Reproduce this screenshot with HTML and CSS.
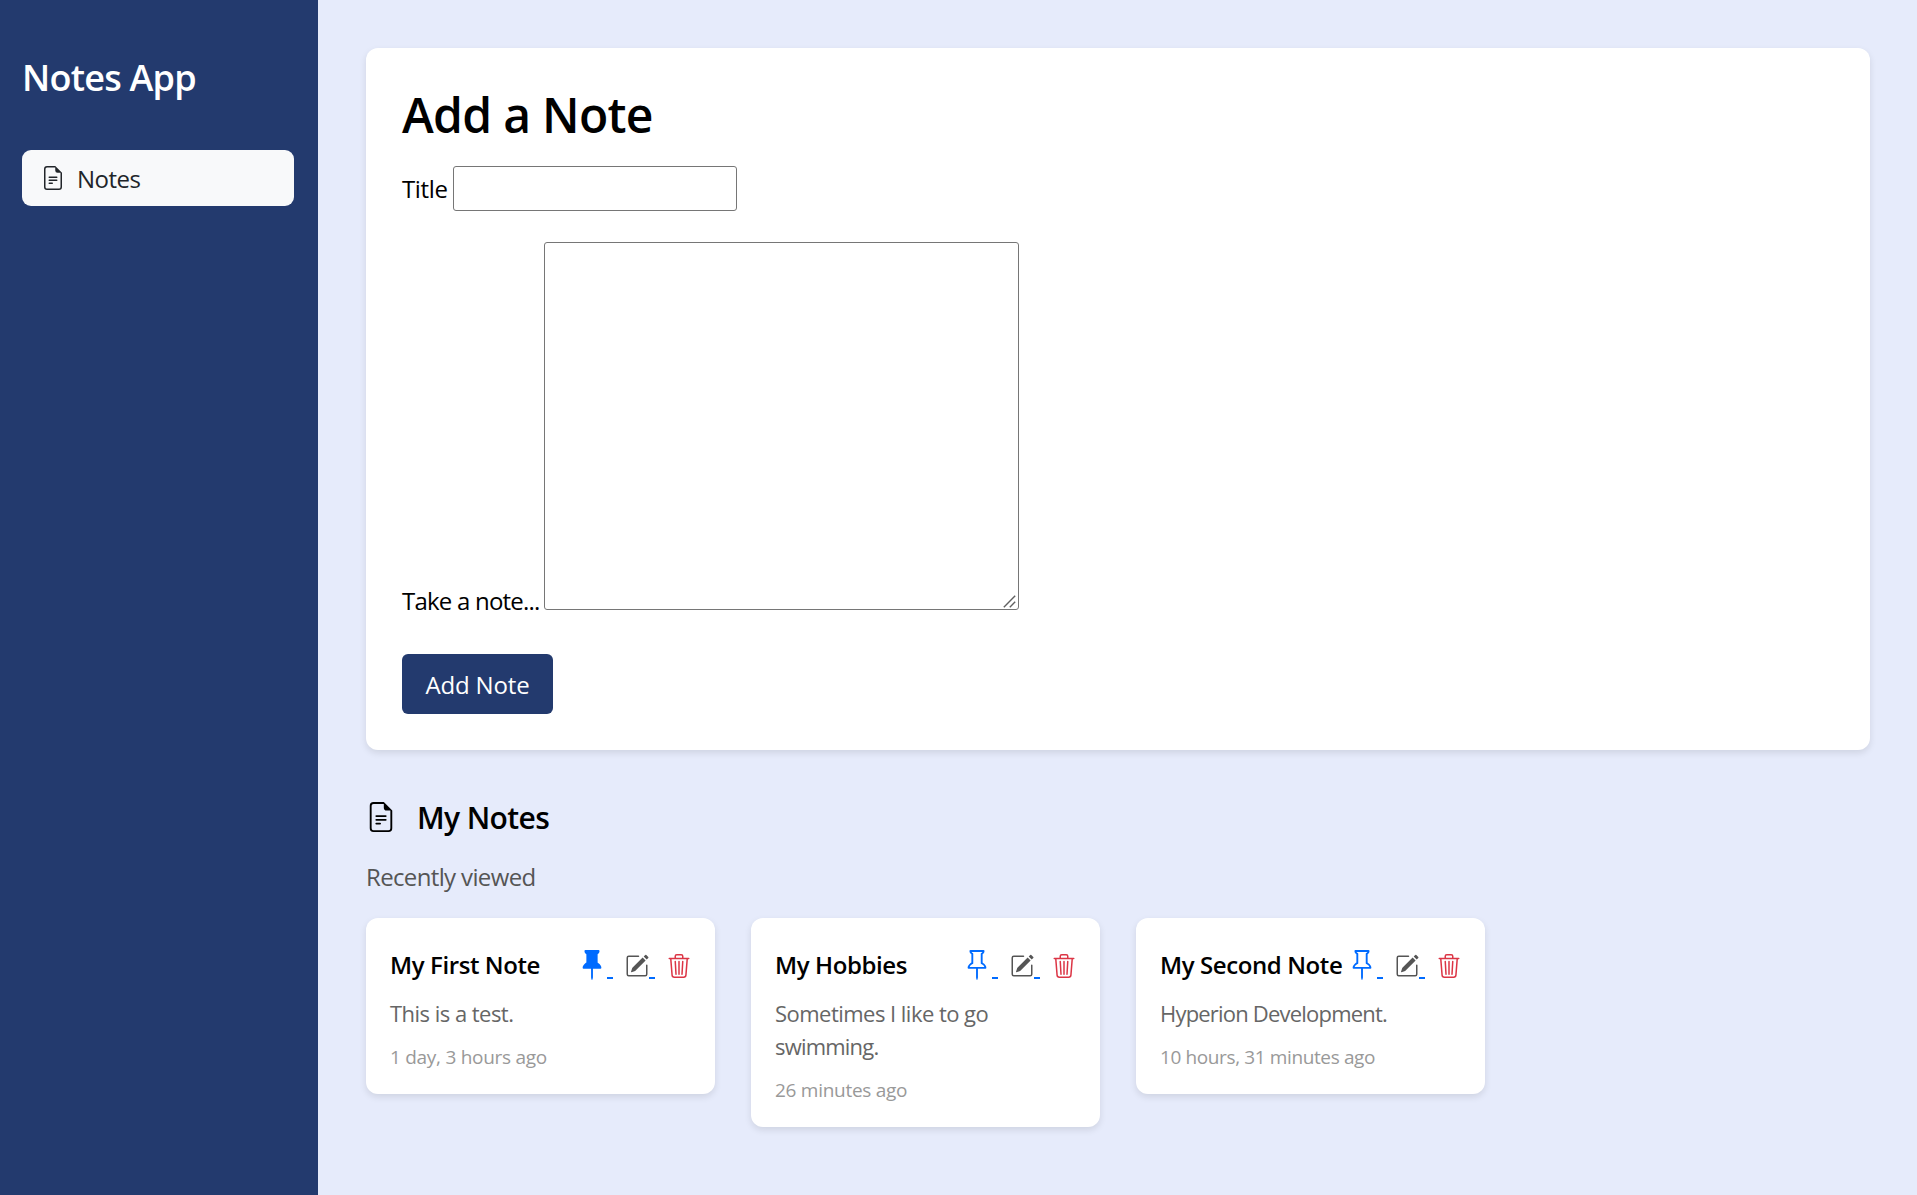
FILE: index.html
```html
<!DOCTYPE html>
<html lang="en">
<head>
<meta charset="utf-8">
<title>Notes App</title>
<link rel="stylesheet" href="styles.css">
</head>
<body>
<svg class="sprite" aria-hidden="true">
  <symbol id="file" viewBox="0 0 16 16"><path d="M5.5 7a.5.5 0 0 0 0 1h5a.5.5 0 0 0 0-1zM5 9.5a.5.5 0 0 1 .5-.5h5a.5.5 0 0 1 0 1h-5a.5.5 0 0 1-.5-.5m0 2a.5.5 0 0 1 .5-.5h2a.5.5 0 0 1 0 1h-2a.5.5 0 0 1-.5-.5"/><path d="M9.5 0H4a2 2 0 0 0-2 2v12a2 2 0 0 0 2 2h8a2 2 0 0 0 2-2V4.5zm0 1v2A1.5 1.5 0 0 0 11 4.5h2V14a1 1 0 0 1-1 1H4a1 1 0 0 1-1-1V2a1 1 0 0 1 1-1z"/></symbol>
  <symbol id="pin" viewBox="0 0 16 16"><path d="M4.146.146A.5.5 0 0 1 4.5 0h7a.5.5 0 0 1 .5.5c0 .68-.342 1.174-.646 1.479-.126.125-.25.224-.354.298v4.431l.078.048c.203.127.476.314.751.555C12.36 7.775 13 8.527 13 9.5a.5.5 0 0 1-.5.5h-4v4.5c0 .276-.224 1.5-.5 1.5s-.5-1.224-.5-1.5V10h-4a.5.5 0 0 1-.5-.5c0-.973.64-1.725 1.17-2.189A6 6 0 0 1 5 6.708V2.277a3 3 0 0 1-.354-.298C4.342 1.674 4 1.179 4 .5a.5.5 0 0 1 .146-.354m1.58 1.408-.002-.001zm-.002-.001.002.001A.5.5 0 0 1 6 2v5a.5.5 0 0 1-.276.447h-.002l-.012.007-.054.03a5 5 0 0 0-.827.58c-.318.278-.585.596-.725.936h7.792c-.14-.34-.407-.658-.725-.936a5 5 0 0 0-.881-.61l-.012-.006h-.002A.5.5 0 0 1 10 7V2a.5.5 0 0 1 .295-.458 1.8 1.8 0 0 0 .351-.271c.08-.08.155-.17.214-.271H5.14q.091.15.214.271a1.8 1.8 0 0 0 .37.282"/></symbol>
  <symbol id="pin-fill" viewBox="0 0 16 16"><path d="M4.146.146A.5.5 0 0 1 4.5 0h7a.5.5 0 0 1 .5.5c0 .68-.342 1.174-.646 1.479-.126.125-.25.224-.354.298v4.431l.078.048c.203.127.476.314.751.555C12.36 7.775 13 8.527 13 9.5a.5.5 0 0 1-.5.5h-4v4.5c0 .276-.224 1.5-.5 1.5s-.5-1.224-.5-1.5V10h-4a.5.5 0 0 1-.5-.5c0-.973.64-1.725 1.17-2.189A6 6 0 0 1 5 6.708V2.277a3 3 0 0 1-.354-.298C4.342 1.674 4 1.179 4 .5a.5.5 0 0 1 .146-.354"/></symbol>
  <symbol id="edit" viewBox="0 0 16 16"><path d="M15.502 1.94a.5.5 0 0 1 0 .706L14.459 3.69l-2-2L13.502.646a.5.5 0 0 1 .707 0l1.293 1.293zm-1.75 2.456-2-2L4.939 9.21a.5.5 0 0 0-.121.196l-.805 2.414a.25.25 0 0 0 .316.316l2.414-.805a.5.5 0 0 0 .196-.12l6.813-6.814z"/><path fill-rule="evenodd" d="M1 13.5A1.5 1.5 0 0 0 2.5 15h11a1.5 1.5 0 0 0 1.5-1.5v-6a.5.5 0 0 0-1 0v6a.5.5 0 0 1-.5.5h-11a.5.5 0 0 1-.5-.5v-11a.5.5 0 0 1 .5-.5H9a.5.5 0 0 0 0-1H2.5A1.5 1.5 0 0 0 1 2.5z"/></symbol>
  <symbol id="trash" viewBox="0 0 16 16"><path d="M6.5 1h3a.5.5 0 0 1 .5.5v1H6v-1a.5.5 0 0 1 .5-.5M11 2.5v-1A1.5 1.5 0 0 0 9.5 0h-3A1.5 1.5 0 0 0 5 1.5v1H1.5a.5.5 0 0 0 0 1h.538l.853 10.66A2 2 0 0 0 4.885 16h6.23a2 2 0 0 0 1.994-1.84l.853-10.66h.538a.5.5 0 0 0 0-1zm1.958 1-.846 10.58a1 1 0 0 1-.997.92h-6.23a1 1 0 0 1-.997-.92L3.042 3.5zm-7.487 1a.5.5 0 0 1 .528.47l.5 8.5a.5.5 0 0 1-.998.06L5 5.03a.5.5 0 0 1 .47-.53m5.058 0a.5.5 0 0 1 .47.53l-.5 8.5a.5.5 0 1 1-.998-.06l.5-8.5a.5.5 0 0 1 .528-.47M8 4.5a.5.5 0 0 1 .5.5v8.5a.5.5 0 0 1-1 0V5a.5.5 0 0 1 .5-.5"/></symbol>
</svg>
<div class="app">
  <aside class="sidebar">
    <h2 class="brand">Notes App</h2>
    <nav><a class="nav-link" href="#"><svg class="icon"><use href="#file"/></svg><span>Notes</span></a></nav>
  </aside>
  <main class="main">
    <form class="panel">
      <h1 class="panel-title">Add a Note</h1>
      <div class="field"><label for="title">Title</label><input id="title" type="text"></div>
      <div class="field field-body"><label for="body">Take a note...</label><div class="area"><textarea id="body"></textarea><svg class="grip" viewBox="0 0 13 13"><path d="M.8 12.2 12.2.8M6.8 12.2l5.4-5.4"/></svg></div></div>
      <button class="btn" type="button">Add Note</button>
    </form>
    <h2 class="section-title"><svg class="icon icon-lg"><use href="#file"/></svg><span>My Notes</span></h2>
    <p class="subtitle">Recently viewed</p>
    <div class="notes">
      <article class="note">
        <header class="note-head"><h3>My First Note</h3>
          <div class="actions"><a class="pin" href="#"><svg class="icon icon-lg"><use href="#pin-fill"/></svg><i class="gap"></i></a><a class="edit" href="#"><svg class="icon"><use href="#edit"/></svg><i class="gap"></i></a><svg class="icon trash"><use href="#trash"/></svg></div></header>
        <p class="text">This is a test.</p>
        <p class="time">1 day, 3 hours ago</p>
      </article>
      <article class="note">
        <header class="note-head"><h3>My Hobbies</h3>
          <div class="actions"><a class="pin" href="#"><svg class="icon icon-lg"><use href="#pin"/></svg><i class="gap"></i></a><a class="edit" href="#"><svg class="icon"><use href="#edit"/></svg><i class="gap"></i></a><svg class="icon trash"><use href="#trash"/></svg></div></header>
        <p class="text">Sometimes I like to go<br><span class="tight">swimming.</span></p>
        <p class="time">26 minutes ago</p>
      </article>
      <article class="note note-compact">
        <header class="note-head"><h3>My Second Note</h3>
          <div class="actions"><a class="pin" href="#"><svg class="icon icon-lg"><use href="#pin"/></svg><i class="gap"></i></a><a class="edit" href="#"><svg class="icon"><use href="#edit"/></svg><i class="gap"></i></a><svg class="icon trash"><use href="#trash"/></svg></div></header>
        <p class="text tight">Hyperion Development.</p>
        <p class="time">10 hours, 31 minutes ago</p>
      </article>
    </div>
  </main>
</div>
</body>
</html>
```
FILE: styles.css
```css
* { box-sizing: border-box; margin: 0; }
body { font-family: "Open Sans", "Noto Sans", sans-serif; font-size: 24px; line-height: 36px; color: #000; background: #e6ebfb; white-space: nowrap; }
.sprite { display: none; }
.app { display: flex; height: 1195px; }
.icon { width: 24px; height: 24px; fill: currentColor; flex: none; }
.icon-lg { width: 30px; height: 30px; }

.sidebar { width: 318px; padding: 51px 24px 0 22px; background: #233a6e; color: #fff; }
.brand { font-size: 36px; font-weight: 600; line-height: 54px; letter-spacing: -.75px; }
.nav-link { display: flex; align-items: center; gap: 12px; height: 56px; margin-top: 45px; padding-left: 19px; border-radius: 9px; background: #f8f9fa; color: #212529; letter-spacing: -.5px; text-decoration: none; }
.nav-link span { padding-top: 2px; }

.main { flex: 1; padding: 48px 47px 0 48px; }
.panel { height: 702px; padding: 38px 36px 36px; border-radius: 12px; background: #fff; box-shadow: 0 3px 7.5px rgba(0, 0, 0, .1); }
.panel-title { font-size: 48px; font-weight: 600; line-height: 58px; margin-bottom: 22px; letter-spacing: -.7px; }
.field { display: flex; align-items: center; }
.field label { width: 51px; letter-spacing: -.35px; }
input, textarea { display: block; border: 1px solid #767676; border-radius: 3px; background: #fff; }
input { width: 284px; height: 45px; }
.field-body { align-items: flex-end; margin: 31px 0 44px; }
.field-body label { width: 142px; margin-bottom: -9px; letter-spacing: -.78px; }
.area { position: relative; }
textarea { width: 475px; height: 368px; resize: none; }
.grip { position: absolute; right: 3px; bottom: 2px; width: 13px; height: 13px; fill: none; stroke: #606060; stroke-width: 1.4; }
.btn { width: 151px; height: 60px; padding: 2px 0 0; border: 0; border-radius: 6px; background: #233a6e; color: #fff; font: inherit; letter-spacing: -.15px; }

.section-title { display: flex; align-items: center; gap: 21px; height: 30px; margin-top: 52px; font-size: 30px; font-weight: 600; letter-spacing: -.6px; }
.section-title span { padding-top: 2px; }
.subtitle { margin: 27px 0 23px; color: #555; letter-spacing: -.64px; }
.notes { display: flex; align-items: flex-start; gap: 36px; }
.note { width: 349px; padding: 24px 24px 23px; border-radius: 12px; background: #fff; box-shadow: 0 3px 7.5px rgba(0, 0, 0, .1); }
.note-head { display: flex; align-items: center; justify-content: space-between; height: 47px; margin-bottom: 8px; }
.note-head h3 { padding-bottom: 2px; font-size: 24px; font-weight: 600; letter-spacing: -.4px; }
.actions { display: flex; align-items: center; gap: 12px; }
.actions a { display: flex; align-items: flex-end; color: #006bff; }
.pin .icon { margin-bottom: 2px; }
.gap { width: 6px; height: 2px; background: #006bff; }
.pin .gap { margin-bottom: 3px; }
.edit .gap { margin-bottom: -1px; }
.edit .icon { color: #555; }
.trash { color: #dc3545; }
.text { font-size: 22px; line-height: 33px; color: #666; letter-spacing: -.53px; }
.tight { letter-spacing: -.8px; }
.time { padding-top: 1px; margin: 12px 0 -1px; font-size: 19px; line-height: 29px; color: #999; letter-spacing: -.28px; }
.note-compact .time { letter-spacing: -.38px; }
```
